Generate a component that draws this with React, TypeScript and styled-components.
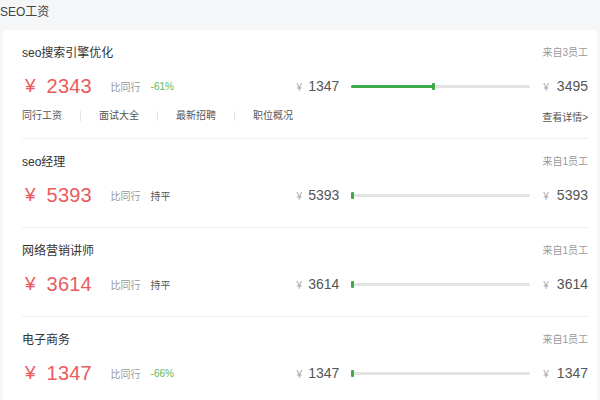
import styled, { createGlobalStyle } from "styled-components";

const GlobalStyle = createGlobalStyle`
  html, body {
    margin: 0;
    padding: 0;
    background: #f5f6f8;
    font-family: "Liberation Sans", "Noto Sans CJK SC", sans-serif;
  }
`;

const Page = styled.div`
  width: 600px;
  height: 400px;
  overflow: hidden;
  background: #f5f6f8;
`;

const Header = styled.h2`
  margin: 0;
  padding: 5px 0 11px 0;
  font-size: 12px;
  line-height: 14px;
  font-weight: normal;
  color: #444;
`;

const Card = styled.div`
  margin: 0 3px;
  padding: 0 9px 0 19px;
  background: #fff;
  min-height: 370px;
`;

const Item = styled.div<{ $last?: boolean }>`
  padding: 12px 0 ${(p) => (p.$last ? "16px" : "14px")};
  border-bottom: ${(p) => (p.$last ? "none" : "1px solid #efefef")};
`;

const TitleRow = styled.div`
  display: flex;
  justify-content: space-between;
  align-items: center;
  height: 18px;
`;

const Title = styled.span`
  font-size: 12px;
  color: #333;
`;

const Source = styled.span`
  font-size: 10px;
  color: #999;
`;

const PriceRow = styled.div<{ $withLinks?: boolean }>`
  display: flex;
  align-items: center;
  height: 30px;
  margin-top: 11px;
  margin-bottom: ${(p) => (p.$withLinks ? "7px" : "3px")};
`;

const Main = styled.div`
  flex: 1;
  display: flex;
  align-items: center;
  padding-left: 3px;
`;

const Price = styled.span`
  font-size: 20px;
  color: #ea5b5d;
  width: 64px;
  letter-spacing: 0.2px;
`;

const Yen = styled.span<{ $small?: boolean; $gap?: number }>`
  font-size: ${(p) => (p.$small ? "10px" : "19px")};
  color: ${(p) => (p.$small ? "#aaa" : "#ea5b5d")};
  margin-right: ${(p) => p.$gap ?? 10}px;
`;

const Compare = styled.span`
  font-size: 10px;
  color: #999;
`;

const Diff = styled.span<{ $flat?: boolean }>`
  font-size: 10px;
  margin-left: 10px;
  color: ${(p) => (p.$flat ? "#555" : "#5cb85c")};
`;

const Amount = styled.span`
  font-size: 14px;
  color: #555;
`;

const Bar = styled.div`
  position: relative;
  width: 179px;
  height: 3px;
  background: #e3e3e3;
  border-radius: 2px;
  margin: 0 13px 0 12px;
`;

const Fill = styled.div`
  position: relative;
  height: 3px;
  background: #3daa47;
  border-radius: 2px;

  &::after {
    content: "";
    position: absolute;
    right: -1px;
    top: -2px;
    width: 3px;
    height: 7px;
    border-radius: 1px;
    background: #3daa47;
  }
`;

const Links = styled.div`
  display: flex;
  align-items: center;
  height: 16px;
`;

const LinkItem = styled.a`
  font-size: 10px;
  color: #555;
  text-decoration: none;
  padding: 0 18px;
  line-height: 10px;
  border-left: 1px solid #e2e2e2;

  &:first-child {
    padding-left: 0;
    border-left: none;
  }
`;

const More = styled.a`
  margin-left: auto;
  font-size: 10px;
  color: #555;
  text-decoration: none;
`;

type Job = {
  title: string;
  count: number;
  salary: number;
  diff: string;
  low: number;
  high: number;
  links?: boolean;
};

const jobs: Job[] = [
  { title: "seo搜索引擎优化", count: 3, salary: 2343, diff: "-61%", low: 1347, high: 3495, links: true },
  { title: "seo经理", count: 1, salary: 5393, diff: "持平", low: 5393, high: 5393 },
  { title: "网络营销讲师", count: 1, salary: 3614, diff: "持平", low: 3614, high: 3614 },
  { title: "电子商务", count: 1, salary: 1347, diff: "-66%", low: 1347, high: 1347 },
];

function Range({ job }: { job: Job }) {
  const span = job.high - job.low;
  const pct = span > 0 ? ((job.salary - job.low) / span) * 100 : 0;
  return (
    <>
      <Amount>
        <Yen $small $gap={6}>¥</Yen>
        {job.low}
      </Amount>
      <Bar>
        <Fill style={{ width: `${Math.max(pct, 1)}%` }} />
      </Bar>
      <Amount>
        <Yen $small $gap={8}>¥</Yen>
        {job.high}
      </Amount>
    </>
  );
}

export default function App() {
  return (
    <Page>
      <GlobalStyle />
      <Header>SEO工资</Header>
      <Card>
        {jobs.map((job, i) => (
          <Item key={job.title} $last={i === jobs.length - 1}>
            <TitleRow>
              <Title>{job.title}</Title>
              <Source>来自{job.count}员工</Source>
            </TitleRow>
            <PriceRow $withLinks={job.links}>
              <Main>
                <Yen $gap={11}>¥</Yen>
                <Price>{job.salary}</Price>
                <Compare>比同行</Compare>
                <Diff $flat={job.diff === "持平"}>{job.diff}</Diff>
              </Main>
              <Range job={job} />
            </PriceRow>
            {job.links && (
              <Links>
                <LinkItem>同行工资</LinkItem>
                <LinkItem>面试大全</LinkItem>
                <LinkItem>最新招聘</LinkItem>
                <LinkItem>职位概况</LinkItem>
                <More>查看详情&gt;</More>
              </Links>
            )}
          </Item>
        ))}
      </Card>
    </Page>
  );
}
